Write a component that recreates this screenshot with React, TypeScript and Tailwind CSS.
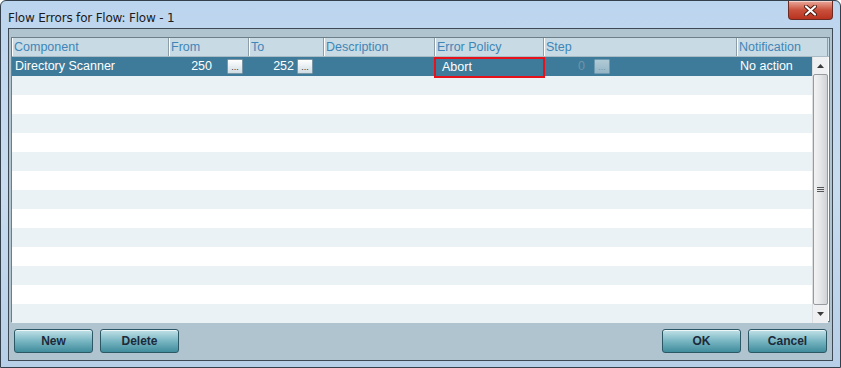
import { ReactNode } from 'react';

const cols = [
  { name: 'Component', w: 'w-[157px]' },
  { name: 'From', w: 'w-[80px]' },
  { name: 'To', w: 'w-[75px]' },
  { name: 'Description', w: 'w-[111px]' },
  { name: 'Error Policy', w: 'w-[109px]' },
  { name: 'Step', w: 'w-[193px]' },
  { name: 'Notification', w: 'w-[91px]' },
];

function DotsButton({ faded }: { faded?: boolean }) {
  return (
    <div
      className={`w-[16px] h-[15px] flex items-end justify-center border rounded-[1px] bg-gradient-to-b from-white to-[#cfdde4] text-[9px] leading-[10px] pb-[1px] ${
        faded ? 'border-[#8fb1c3] text-[#9ab] opacity-60' : 'border-[#7c97a5] text-[#333]'
      }`}
    >
      ...
    </div>
  );
}

function DlgButton({ children, className = '' }: { children: ReactNode; className?: string }) {
  return (
    <button
      className={`w-[79px] h-[24px] rounded-[3px] border border-[#2c5866] bg-gradient-to-b from-[#c2e2e8] via-[#78b6c3] to-[#3f8c9c] shadow-[inset_0_1px_0_rgba(255,255,255,0.7)] text-[12px] font-bold text-[#1c2a3a] ${className}`}
    >
      {children}
    </button>
  );
}

export default function App() {
  const rows = Array.from({ length: 13 }, (_, i) => i);

  return (
    <div className="w-[841px] h-[368px] flex flex-col bg-gradient-to-b from-[#bcd5ee] via-[#c9dcef] to-[#b7cfe7] border border-[#34404c] rounded-t-[6px] font-['Liberation_Sans',Arial,sans-serif] text-[12px] overflow-hidden">
      {/* title bar */}
      <div className="h-[27px] flex items-start justify-between shrink-0">
        <div className="pl-[7px] pt-[8px] text-[12px] text-[#1b1b1b] font-['DejaVu_Sans',sans-serif] tracking-[-0.2px]">
          Flow Errors for Flow: Flow - 1
        </div>
        <div className="mr-[7px] w-[45px] h-[19px] rounded-b-[4px] border border-[#6b2a22] border-t-0 bg-gradient-to-b from-[#e9a99b] via-[#c9503c] to-[#b8321f] flex items-center justify-center shadow-[inset_0_1px_0_rgba(255,255,255,0.5)]">
          <svg width="13" height="11" viewBox="0 0 13 11">
            <path d="M2 1.5 L11 9.5 M11 1.5 L2 9.5" stroke="#4b1a12" strokeWidth="4" strokeLinecap="round" />
            <path d="M2 1.5 L11 9.5 M11 1.5 L2 9.5" stroke="#fff" strokeWidth="2.2" strokeLinecap="round" />
          </svg>
        </div>
      </div>

      {/* client */}
      <div className="mx-[7px] mb-[6px] flex-1 flex flex-col border border-[#3d4a56] bg-[#afc4cf]">
        <div className="mt-[8px] mx-[2px] h-[285px] border border-[#6d7e88] bg-white flex flex-col">
          {/* header */}
          <div className="flex h-[19px] bg-[#c8dae4] border-b border-[#a9bcc6] shrink-0">
            {cols.map((c) => (
              <div
                key={c.name}
                className={`${c.w} h-full border-r border-[#8d9ea8] border-l border-l-white pl-[1px] text-[#3f86b7] text-[12.5px] leading-[18px] truncate`}
              >
                {c.name}
              </div>
            ))}
          </div>

          <div className="flex flex-1">
            {/* rows */}
            <div className="w-[800px] flex flex-col">
              <div className="h-[19px] bg-[#3e7b9a] text-white text-[12.5px] flex items-center shrink-0">
                <div className="w-[157px] pl-[3px]">Directory Scanner</div>
                <div className="w-[80px] flex items-center">
                  <span className="w-[43px] text-right">250</span>
                  <span className="ml-[15px]"><DotsButton /></span>
                </div>
                <div className="w-[75px] flex items-center">
                  <span className="w-[45px] text-right">252</span>
                  <span className="ml-[3px]"><DotsButton /></span>
                </div>
                <div className="w-[111px]" />
                <div className="relative z-10 self-start w-[111px] h-[21px] border-[2.5px] border-[#e5121c] pl-[6px] leading-[16px] -ml-[1px]">Abort</div>
                <div className="w-[192px] flex items-center">
                  <span className="w-[40px] text-right text-[#6f94a8]">0</span>
                  <span className="ml-[9px]"><DotsButton faded /></span>
                </div>
                <div className="w-[56px] pl-[3px]">No action</div>
              </div>
              {rows.map((i) => (
                <div key={i} className={`h-[19px] shrink-0 ${i % 2 === 0 ? 'bg-[#eaf2f5]' : 'bg-white'}`} />
              ))}
            </div>

            {/* scrollbar */}
            <div className="w-[16px] bg-[#eef0f1] border-l border-[#dcdfe1] flex flex-col items-center">
              <div className="h-[17px] flex items-center justify-center">
                <svg width="7" height="4" viewBox="0 0 7 4"><path d="M0 4 L3.5 0 L7 4 Z" fill="#3b3b3b" /></svg>
              </div>
              <div className="w-[15px] flex-1 rounded-[2px] border border-[#979b9f] bg-gradient-to-r from-[#f3f3f3] via-[#e4e6e8] to-[#d0d3d6] flex items-center justify-center">
                <div className="flex flex-col gap-[1px]">
                  <div className="w-[7px] h-[1px] bg-[#555]" />
                  <div className="w-[7px] h-[1px] bg-[#555]" />
                  <div className="w-[7px] h-[1px] bg-[#555]" />
                </div>
              </div>
              <div className="h-[18px] flex items-center justify-center">
                <svg width="7" height="4" viewBox="0 0 7 4"><path d="M0 0 L3.5 4 L7 0 Z" fill="#3b3b3b" /></svg>
              </div>
            </div>
          </div>
        </div>

        {/* buttons */}
        <div className="flex justify-between px-[5px] mt-[7px]">
          <div className="flex gap-[7px]">
            <DlgButton>New</DlgButton>
            <DlgButton>Delete</DlgButton>
          </div>
          <div className="flex gap-[7px]">
            <DlgButton>OK</DlgButton>
            <DlgButton>Cancel</DlgButton>
          </div>
        </div>
      </div>
    </div>
  );
}
